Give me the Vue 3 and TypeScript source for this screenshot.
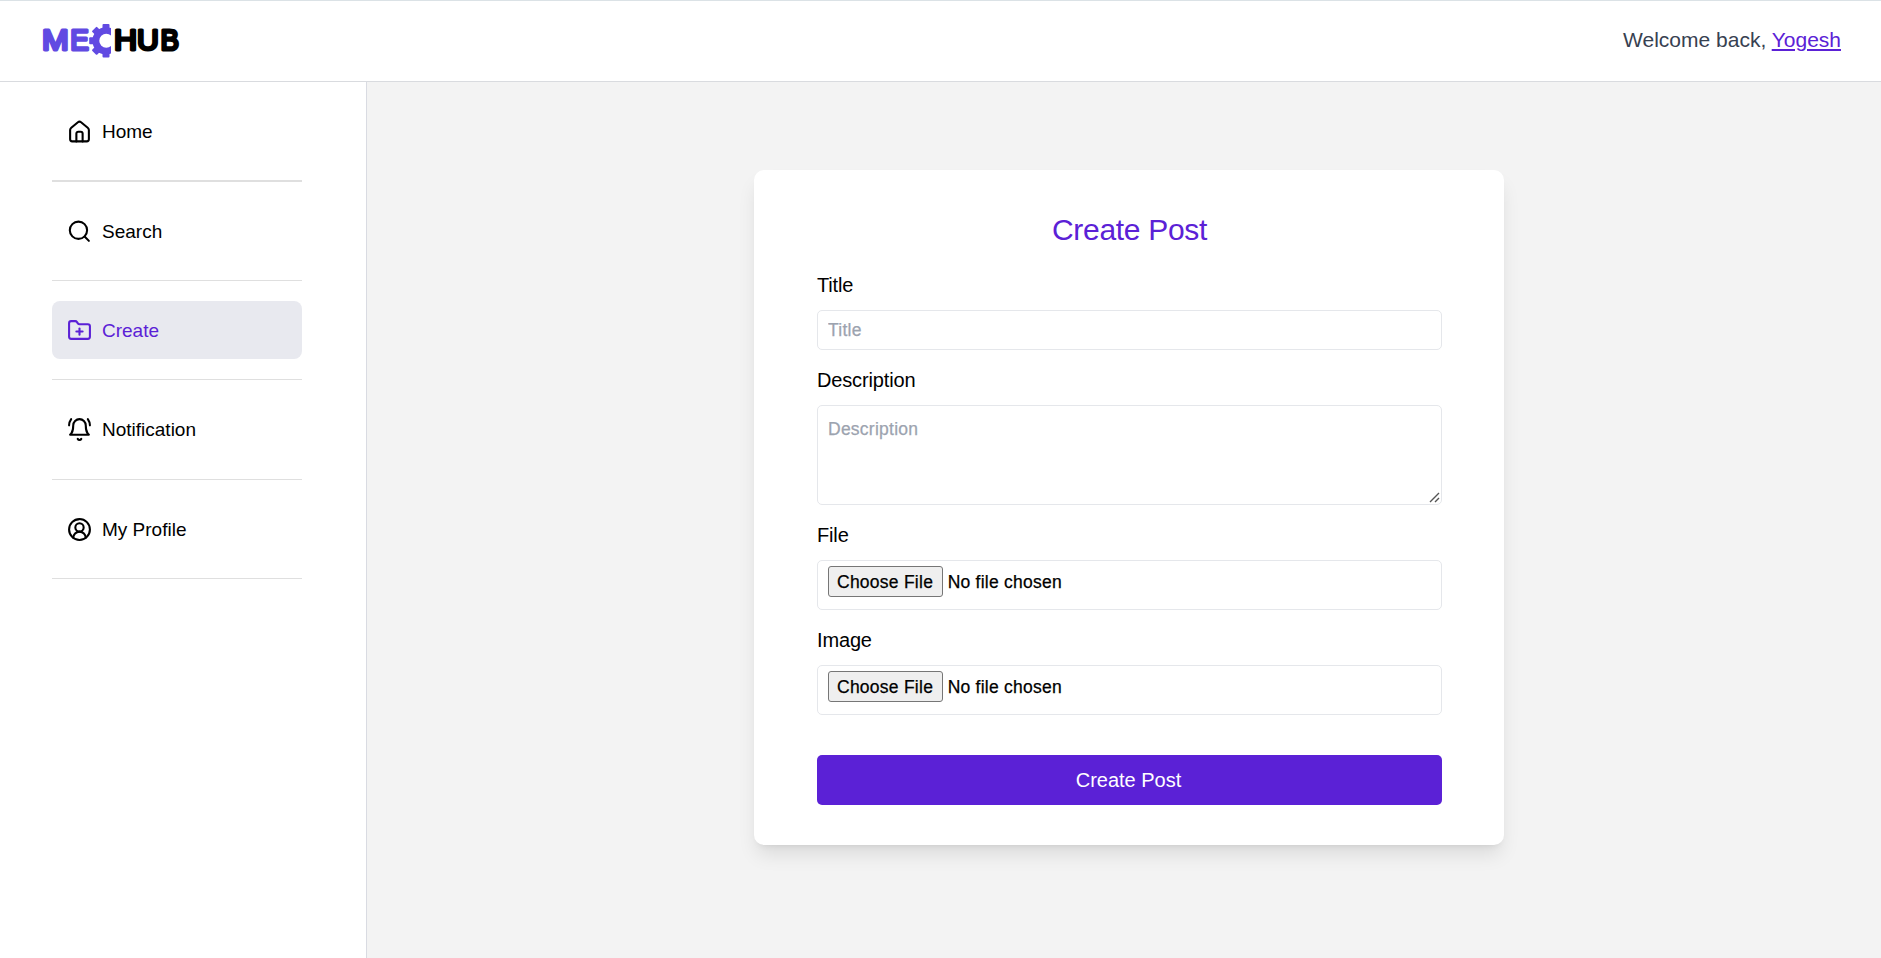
<script setup lang="ts">
import { ref } from 'vue'

type IconName = 'home' | 'search' | 'create' | 'bell' | 'profile'

interface NavItem {
  label: string
  icon: IconName
}

interface LogoLetter {
  char: string
  x: number
  width: number
  dark: boolean
}

const navItems: NavItem[] = [
  { label: 'Home', icon: 'home' },
  { label: 'Search', icon: 'search' },
  { label: 'Create', icon: 'create' },
  { label: 'Notification', icon: 'bell' },
  { label: 'My Profile', icon: 'profile' },
]

const logoLetters: LogoLetter[] = [
  { char: 'M', x: 0.1, width: 26.7, dark: false },
  { char: 'E', x: 28.3, width: 18.6, dark: false },
  { char: 'H', x: 71.9, width: 23.1, dark: true },
  { char: 'U', x: 95.1, width: 21.8, dark: true },
  { char: 'B', x: 118.5, width: 18.5, dark: true },
]

const gearTeeth: number[] = [0, -45, -90, -135, 180]

const icons: Record<IconName, string[]> = {
  home: [
    'M12 2.500c.6 0 1 .2 1.500.6l6.400 5.300c.7.6 1.100 1.200 1.100 2.100v9a2 2 0 0 1-2 2H5a2 2 0 0 1-2-2v-9c0-.9.4-1.500 1.100-2.100l6.400-5.300c.5-.4.9-.6 1.500-.6z',
    'M9 21.500v-7.500a1.800 1.800 0 0 1 1.800-1.800h2.400a1.800 1.800 0 0 1 1.800 1.800v7.500',
  ],
  search: ['M11 2.500a8.300 8.300 0 1 0 0 16.600 8.300 8.300 0 0 0 0-16.600z', 'm21 21-4.100-4.100'],
  create: [
    'M12 10v6',
    'M9 13h6',
    'M20 20a2 2 0 0 0 2-2V8a2 2 0 0 0-2-2h-7.900a2 2 0 0 1-1.690-.9L9.600 3.900A2 2 0 0 0 7.930 3H4a2 2 0 0 0-2 2v13a2 2 0 0 0 2 2Z',
  ],
  bell: [
    'M6 8a6 6 0 0 1 12 0c0 7 3 9 3 9H3s3-2 3-9',
    'M10.300 21a1.940 1.940 0 0 0 3.400 0',
    'M4 2C2.800 3.700 2 5.700 2 8',
    'M22 8c0-2.300-.8-4.300-2-6',
  ],
  profile: [
    'M12 2a10 10 0 1 0 0 20 10 10 0 0 0 0-20z',
    'M12 6a4 4 0 1 0 0 8 4 4 0 0 0 0-8z',
    'M18 20a6 6 0 0 0-12 0',
  ],
}

const active = ref('Create')
const title = ref('')
const description = ref('')
</script>

<template>
  <div class="page">
    <header class="topbar">
      <svg class="logo" viewBox="0 0 140 36" role="img" aria-label="MECHUB">
        <defs>
          <clipPath id="gear-clip"><rect x="44" y="0" width="25" height="36" /></clipPath>
        </defs>
        <text
          v-for="letter in logoLetters"
          :key="letter.char"
          :class="{ dark: letter.dark }"
          :x="letter.x"
          y="26.5"
          :textLength="letter.width"
          lengthAdjust="spacingAndGlyphs"
        >{{ letter.char }}</text>
        <g clip-path="url(#gear-clip)">
          <circle class="gear" cx="64" cy="17.8" r="13.6" />
          <rect
            v-for="angle in gearTeeth"
            :key="angle"
            class="gear"
            x="60.5"
            y="1"
            width="7"
            height="8"
            rx="1"
            :transform="`rotate(${angle} 64 17.8)`"
          />
          <circle class="gear-hole" cx="64.300" cy="17.8" r="7" />
        </g>
      </svg>
      <p class="welcome">Welcome back, <a href="#" class="user">Yogesh</a></p>
    </header>

    <div class="body">
      <nav class="sidebar">
        <div v-for="item in navItems" :key="item.label" class="nav-row">
          <a
            href="#"
            class="nav-link"
            :class="{ active: item.label === active }"
            @click.prevent="active = item.label"
          >
            <svg class="icon" viewBox="0 0 24 24">
              <path v-for="d in icons[item.icon]" :key="d" :d="d" />
            </svg>
            <span>{{ item.label }}</span>
          </a>
        </div>
      </nav>

      <main class="content">
        <form class="card" @submit.prevent>
          <h1>Create Post</h1>
          <label for="title">Title</label>
          <input id="title" v-model="title" class="field" type="text" placeholder="Title" />
          <label for="description">Description</label>
          <div class="area-wrap">
            <textarea id="description" v-model="description" class="field area" placeholder="Description"></textarea>
            <svg class="grip" viewBox="0 0 11 11">
              <path d="M1 10L10 1M6 10L10 6" />
            </svg>
          </div>
          <label for="file">File</label>
          <input id="file" class="field file" type="file" />
          <label for="image">Image</label>
          <input id="image" class="field file" type="file" />
          <button class="submit" type="submit">Create Post</button>
        </form>
      </main>
    </div>
  </div>
</template>

<style>
body {
  margin: 0;
  overflow: hidden;
}
</style>

<style scoped>
.page,
.page * {
  box-sizing: border-box;
}
.page {
  display: flex;
  flex-direction: column;
  height: 958px;
  background: #fff;
  color: #000;
  font-family: "Liberation Sans", Arial, sans-serif;
}
.topbar {
  flex: none;
  display: flex;
  align-items: center;
  justify-content: space-between;
  height: 82px;
  padding: 0 40px 0 42px;
  border-top: 1px solid #dbe2e6;
  border-bottom: 1px solid #d9dbdf;
}
.logo {
  width: 140px;
  height: 36px;
}
.logo text {
  fill: #614ae2;
  stroke: #614ae2;
  stroke-width: 3px;
  stroke-linejoin: round;
  font: 400 29px "Liberation Sans", Arial, sans-serif;
}
.logo text.dark {
  fill: #000;
  stroke: #000;
}
.gear {
  fill: #614ae2;
}
.gear-hole {
  fill: #fff;
}
.welcome {
  margin: 0 0 2px;
  color: #374151;
  font-size: 21px;
  line-height: 30px;
}
.user {
  color: #5b21d6;
  text-decoration: underline;
}
.body {
  flex: 1;
  display: flex;
  min-height: 0;
}
.sidebar {
  flex: none;
  width: 367px;
  padding: 0 64px 0 52px;
  border-right: 1px solid #d9dbe2;
}
.nav-row {
  height: 99px;
  padding-top: 20px;
  border-bottom: 1px solid #dfdfdf;
}
.nav-row:nth-child(1) {
  height: 100px;
  border-bottom-width: 2px;
}
.nav-row:nth-child(4) {
  height: 100px;
}
.nav-link {
  display: flex;
  align-items: center;
  gap: 10px;
  height: 58px;
  padding-left: 15px;
  border-radius: 8px;
  color: #000;
  font-size: 19px;
  text-decoration: none;
}
.nav-link span {
  padding-top: 2px;
}
.nav-link.active {
  background: #e8e9ef;
  color: #5b21d6;
}
.icon {
  width: 25px;
  height: 25px;
  fill: none;
  stroke: currentColor;
  stroke-width: 2;
  stroke-linecap: round;
  stroke-linejoin: round;
}
.content {
  flex: 1;
  padding: 88px 0 0 387px;
  background: #f3f3f3;
}
.card {
  display: flex;
  flex-direction: column;
  width: 750px;
  height: 675px;
  padding: 40px 62px 40px 63px;
  border-radius: 10px;
  background: #fff;
  box-shadow: 0 12.5px 18.75px -3.75px rgba(0, 0, 0, 0.1), 0 5px 7.5px -5px rgba(0, 0, 0, 0.1);
}
h1 {
  margin: 0 0 20px;
  color: #5b21d6;
  font-size: 30px;
  font-weight: 400;
  line-height: 40px;
  letter-spacing: -0.3px;
  text-align: center;
}
label {
  margin-bottom: 10px;
  font-size: 20px;
  line-height: 30px;
  letter-spacing: -0.15px;
}
.field {
  width: 100%;
  height: 40px;
  margin: 0 0 15px;
  padding: 5px 10px;
  border: 1px solid #e5e7eb;
  border-radius: 5px;
  outline: none;
  background: #fff;
  color: #000;
  font: 17.500px "Liberation Sans", Arial, sans-serif;
  letter-spacing: 0.25px;
  -webkit-text-stroke: 0.25px;
}
.field::placeholder {
  color: #9ca3af;
}
.area-wrap {
  position: relative;
  height: 100px;
  margin-bottom: 15px;
}
.area {
  display: block;
  height: 100px;
  margin: 0;
  padding-top: 11px;
  line-height: 25px;
  resize: none;
}
.grip {
  position: absolute;
  right: 2px;
  bottom: 2px;
  width: 11px;
  height: 11px;
  fill: none;
  stroke: #555;
  stroke-width: 1.400;
}
.file {
  height: 50px;
}
.file::file-selector-button {
  height: 31px;
  margin: 0 5px 0 0;
  padding: 1px 8.500px 0 8px;
  border: 1px solid #767676;
  border-radius: 3px;
  background: #efefef;
  color: #000;
  font: inherit;
  letter-spacing: inherit;
}
.submit {
  height: 50px;
  margin-top: 25px;
  padding: 0 2px 0 0;
  border: 0;
  border-radius: 5px;
  background: #5b21d6;
  color: #fff;
  font: 20px "Liberation Sans", Arial, sans-serif;
}
</style>
